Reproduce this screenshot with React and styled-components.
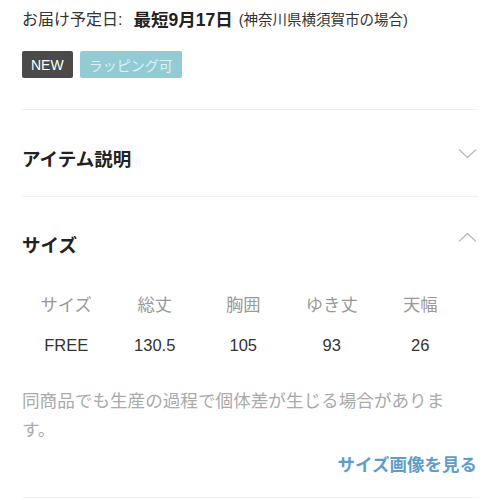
import React from "react";
import styled, { createGlobalStyle } from "styled-components";

const Global = createGlobalStyle`
  html, body { margin: 0; padding: 0; background: #fff; }
  body { font-family: "Liberation Sans", "Noto Sans CJK JP", sans-serif; color: #222; }
`;

const Page = styled.div`
  width: 500px;
  height: 500px;
  overflow: hidden;
  padding: 0 22px;
  box-sizing: border-box;
`;

const Delivery = styled.div`
  height: 36px;
  display: flex;
  align-items: center;
  white-space: nowrap;
  font-size: 16px;
  color: #333;
`;

const Label = styled.span`
  margin-right: 11px;
`;

const Strong = styled.span`
  font-weight: 700;
  font-size: 17.5px;
  color: #222;
  margin-right: 6px;
`;

const Small = styled.span`
  font-size: 14.5px;
  color: #333;
`;

const Badges = styled.div`
  display: flex;
  gap: 7px;
  margin-top: 15px;
  padding-bottom: 31px;
  border-bottom: 1px solid #f0f0f0;
`;

const Badge = styled.span`
  height: 27px;
  display: inline-flex;
  align-items: center;
  padding: 0 ${(p) => p.$pad}px;
  border-radius: 2px;
  font-size: 14px;
  background: ${(p) => p.$bg};
  color: ${(p) => p.$fg};
`;

const Section = styled.div`
  border-bottom: ${(p) => (p.$line ? "1px solid #f0f0f0" : "none")};
`;

const Header = styled.div`
  height: ${(p) => p.$h}px;
  display: flex;
  align-items: center;
  justify-content: space-between;
`;

const Title = styled.h2`
  margin: 0;
  padding-top: ${(p) => p.$pt}px;
  font-size: 18.5px;
  font-weight: 700;
  color: #222;
`;

const Chevron = styled.svg`
  width: 19px;
  height: 11px;
  margin-right: 1px;
  margin-bottom: ${(p) => p.$mb}px;
`;

const SizeGrid = styled.div`
  display: grid;
  grid-template-columns: repeat(5, 88.5px);
  margin-top: 2px;
`;

const HeadCell = styled.div`
  text-align: center;
  font-size: 17.3px;
  color: #999;
  height: 40px;
  line-height: 40px;
`;

const ValCell = styled.div`
  text-align: center;
  font-size: 16.5px;
  color: #333;
  height: 40px;
  line-height: 40px;
`;

const Note = styled.p`
  margin: 22px 0 0;
  width: 440px;
  font-size: 17.6px;
  line-height: 29px;
  color: #aaa;
`;

const LinkRow = styled.div`
  display: flex;
  justify-content: flex-end;
  margin-top: 2px;
  height: 32px;
  align-items: center;
  border-bottom: 1px solid #f0f0f0;
  padding-bottom: 18px;
`;

const Link = styled.a`
  font-size: 17.5px;
  font-weight: 700;
  color: #5e9dcb;
  text-decoration: none;
  margin-right: 1px;
`;

const Down = ({ mb }) => (
  <Chevron $mb={mb} viewBox="0 0 19 11" fill="none">
    <path d="M1 1.5 L9.5 9.5 L18 1.5" stroke="#bdbdbd" strokeWidth="1.3" />
  </Chevron>
);
const Up = ({ mb }) => (
  <Chevron $mb={mb} viewBox="0 0 19 11" fill="none">
    <path d="M1 9.5 L9.5 1.5 L18 9.5" stroke="#bdbdbd" strokeWidth="1.3" />
  </Chevron>
);

const heads = ["サイズ", "総丈", "胸囲", "ゆき丈", "天幅"];
const vals = ["FREE", "130.5", "105", "93", "26"];

export default function App() {
  return (
    <>
      <Global />
      <Page>
        <Delivery>
          <Label>お届け予定日:</Label>
          <Strong>最短9月17日</Strong>
          <Small>(神奈川県横須賀市の場合)</Small>
        </Delivery>
        <Badges>
          <Badge $bg="#4a4a4a" $fg="#fff" $pad={9}>NEW</Badge>
          <Badge $bg="#93cbd4" $fg="#dcf1f4" $pad={9}>ラッピング可</Badge>
        </Badges>
        <Section $line>
          <Header $h={86}>
            <Title $pt={10}>アイテム説明</Title>
            <Down mb={0} />
          </Header>
        </Section>
        <Section>
          <Header $h={86}>
            <Title $pt={8}>サイズ</Title>
            <Up mb={6} />
          </Header>
          <SizeGrid>
            {heads.map((h) => (
              <HeadCell key={h}>{h}</HeadCell>
            ))}
            {vals.map((v) => (
              <ValCell key={v}>{v}</ValCell>
            ))}
          </SizeGrid>
          <Note>同商品でも生産の過程で個体差が生じる場合があります。</Note>
          <LinkRow>
            <Link href="#">サイズ画像を見る</Link>
          </LinkRow>
        </Section>
      </Page>
    </>
  );
}
